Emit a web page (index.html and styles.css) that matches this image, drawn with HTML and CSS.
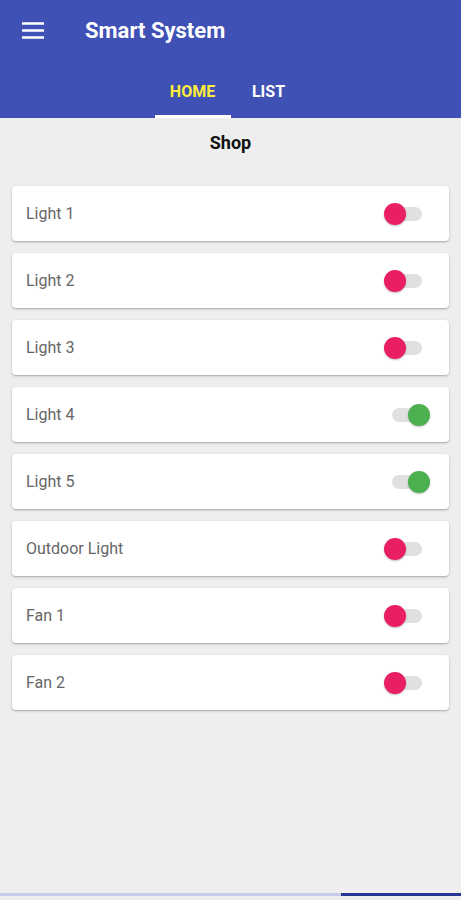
FILE: index.html
```html
<!DOCTYPE html>
<html lang="en">
<head>
  <meta charset="UTF-8">
  <meta name="viewport" content="width=device-width, initial-scale=1.0">
  <title>Smart System</title>
  <link rel="stylesheet" href="styles.css">
</head>
<body>
  <div class="app">
    <header class="appbar">
      <div class="toolbar">
        <svg class="menu" width="24" height="24" viewBox="0 0 24 24">
          <path d="M2 5.5h22M2 12.5h22M2 19.5h22" stroke="#fff" stroke-width="2.6" fill="none"/>
        </svg>
        <h1 class="title">Smart System</h1>
      </div>
      <nav class="tabs">
        <div class="tab active">HOME</div>
        <div class="tab">LIST</div>
      </nav>
    </header>

    <main class="content">
      <h2 class="section">Shop</h2>
      <div class="list">
        <div class="card"><span>Light 1</span><div class="switch"></div></div>
        <div class="card"><span>Light 2</span><div class="switch"></div></div>
        <div class="card"><span>Light 3</span><div class="switch"></div></div>
        <div class="card"><span>Light 4</span><div class="switch on"></div></div>
        <div class="card"><span>Light 5</span><div class="switch on"></div></div>
        <div class="card"><span>Outdoor Light</span><div class="switch"></div></div>
        <div class="card"><span>Fan 1</span><div class="switch"></div></div>
        <div class="card"><span>Fan 2</span><div class="switch"></div></div>
      </div>
    </main>

    <div class="progress"><div class="progress-bar"></div></div>
  </div>
</body>
</html>
```

FILE: styles.css
```css
body {
  margin: 0;
  font-family: Roboto, "Noto Sans", Arial, sans-serif;
  background-color: #eeeeee;
}

.app {
  display: flex;
  flex-direction: column;
  min-height: 100vh;
}

.appbar {
  background-color: #3f51b5;
  color: white;
}

.toolbar {
  display: flex;
  align-items: center;
  height: 62px;
  padding-left: 20px;
}

.menu {
  margin-top: -3px;
}

.title {
  margin: -2px 0 0 41px;
  font-size: 22px;
  font-weight: 700;
}

.tabs {
  display: flex;
  justify-content: center;
  height: 56px;
}

.tab {
  width: 76px;
  display: flex;
  align-items: center;
  justify-content: center;
  font-size: 16px;
  font-weight: 700;
  box-sizing: border-box;
  border-bottom: 3px solid transparent;
  padding-top: 5px;
}

.tab.active {
  color: #ffeb3b;
  border-bottom-color: white;
}

.content {
  flex: 1;
  padding: 0 12px;
}

.section {
  margin: 14px 0 0;
  text-align: center;
  font-size: 18px;
  font-weight: 700;
  color: #111;
}

.list {
  display: flex;
  flex-direction: column;
  gap: 12px;
  margin-top: 33px;
}

.card {
  display: flex;
  align-items: center;
  justify-content: space-between;
  height: 55px;
  padding: 0 27px 0 14px;
  background: white;
  border-radius: 4px;
  box-shadow: 0 1px 3px rgba(0, 0, 0, 0.2), 0 1px 1px rgba(0, 0, 0, 0.12);
  font-size: 16px;
  color: #666;
}

.switch {
  position: relative;
  width: 30px;
  height: 14px;
  border-radius: 7px;
  background-color: #e0e0e0;
}

.switch::after {
  content: "";
  position: absolute;
  top: -4px;
  left: -8px;
  width: 22px;
  height: 22px;
  border-radius: 50%;
  background-color: #e91e63;
  box-shadow: 0 1px 2px rgba(0, 0, 0, 0.25);
}

.switch.on::after {
  left: 16px;
  background-color: #4caf50;
}

.progress {
  height: 3px;
  margin-bottom: 4px;
  background-color: #c5cae9;
}

.progress-bar {
  height: 100%;
  margin-left: 341px;
  background-color: #283593;
}
```
